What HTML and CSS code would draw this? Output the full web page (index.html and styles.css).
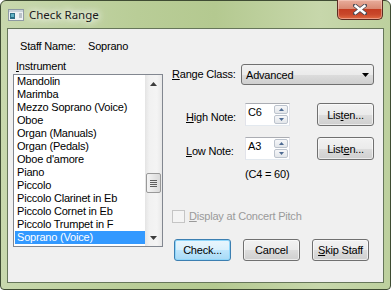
FILE: index.html
```html
<!DOCTYPE html>
<html lang="en">
<head>
    <meta charset="UTF-8">
    <title>Check Range</title>
    <link rel="stylesheet" href="styles.css">
</head>
<body>

<div class="window">
    <div class="titlebar">
        <svg class="app-icon" width="16" height="12" viewBox="0 0 16 12">
            <rect x="0.5" y="0.5" width="15" height="11" fill="#eef2f4" stroke="#8e9aa2"/>
            <rect x="1" y="1" width="14" height="2" fill="#c9d3da"/>
            <rect x="2" y="4" width="5" height="6" fill="#2b6f86"/>
            <rect x="3" y="5" width="3" height="3" fill="#5fb2c4"/>
            <rect x="11" y="4" width="3" height="5" fill="#b9c2c8"/>
        </svg>
        <span class="title">Check Range</span>
        <div class="close">
            <svg width="14" height="11" viewBox="0 0 14 11">
                <path d="M2 1.5 L12 9.5 M12 1.5 L2 9.5" stroke="#4b4b55" stroke-width="4" stroke-linecap="square"/>
                <path d="M2.5 2 L11.5 9 M11.5 2 L2.5 9" stroke="#ffffff" stroke-width="2.4" stroke-linecap="square"/>
            </svg>
        </div>
    </div>

    <div class="client">
        <div class="staff">
            <span class="staff-label">Staff Name:</span>
            <span>Soprano</span>
        </div>

        <div class="main">
            <div class="left">
                <div class="list-label"><u>I</u>nstrument</div>
                <div class="listbox">
                    <ul class="items">
                        <li>Mandolin</li>
                        <li>Marimba</li>
                        <li>Mezzo Soprano (Voice)</li>
                        <li>Oboe</li>
                        <li>Organ (Manuals)</li>
                        <li>Organ (Pedals)</li>
                        <li>Oboe d'amore</li>
                        <li>Piano</li>
                        <li>Piccolo</li>
                        <li>Piccolo Clarinet in Eb</li>
                        <li>Piccolo Cornet in Eb</li>
                        <li>Piccolo Trumpet in F</li>
                        <li class="selected">Soprano (Voice)</li>
                    </ul>
                    <div class="scrollbar">
                        <div class="scroll-btn">
                            <svg width="7" height="4" viewBox="0 0 7 4"><polygon points="3.5,0 7,4 0,4" fill="#3c3c3c"/></svg>
                        </div>
                        <div class="track">
                            <div class="thumb">
                                <span class="grip"></span>
                                <span class="grip"></span>
                                <span class="grip"></span>
                                <span class="grip"></span>
                            </div>
                        </div>
                        <div class="scroll-btn">
                            <svg width="7" height="4" viewBox="0 0 7 4"><polygon points="0,0 7,0 3.5,4" fill="#3c3c3c"/></svg>
                        </div>
                    </div>
                </div>
            </div>

            <div class="right">
                <div class="range-row">
                    <span class="range-label"><u>R</u>ange Class:</span>
                    <div class="dropdown">
                        <span>Advanced</span>
                        <svg width="7" height="4" viewBox="0 0 7 4"><polygon points="0,0 7,0 3.5,4" fill="#000"/></svg>
                    </div>
                </div>

                <div class="note-row high">
                    <span class="note-label"><u>H</u>igh Note:</span>
                    <div class="spin">
                        <span class="spin-text">C6</span>
                        <div class="spin-btns">
                            <div class="spin-btn"><svg width="5" height="3" viewBox="0 0 5 3"><polygon points="2.5,0 5,3 0,3" fill="#4d6a92"/></svg></div>
                            <div class="spin-btn"><svg width="5" height="3" viewBox="0 0 5 3"><polygon points="0,0 5,0 2.5,3" fill="#4d6a92"/></svg></div>
                        </div>
                    </div>
                    <button class="button listen">Lis<u>t</u>en...</button>
                </div>

                <div class="note-row low">
                    <span class="note-label"><u>L</u>ow Note:</span>
                    <div class="spin">
                        <span class="spin-text">A3</span>
                        <div class="spin-btns">
                            <div class="spin-btn"><svg width="5" height="3" viewBox="0 0 5 3"><polygon points="2.5,0 5,3 0,3" fill="#4d6a92"/></svg></div>
                            <div class="spin-btn"><svg width="5" height="3" viewBox="0 0 5 3"><polygon points="0,0 5,0 2.5,3" fill="#4d6a92"/></svg></div>
                        </div>
                    </div>
                    <button class="button listen">List<u>e</u>n...</button>
                </div>

                <div class="hint">(C4 = 60)</div>

                <div class="check-row">
                    <span class="checkbox"></span>
                    <span><u>D</u>isplay at Concert Pitch</span>
                </div>

                <div class="buttons">
                    <button class="button default">Check...</button>
                    <button class="button">Cancel</button>
                    <button class="button"><u>S</u>kip Staff</button>
                </div>
            </div>
        </div>
    </div>
</div>

</body>
</html>
```

FILE: styles.css
```css
body {
    margin: 0;
    background-color: #ffffff;
    font-family: "Liberation Sans", Arial, sans-serif;
    font-size: 11px;
    letter-spacing: -0.2px;
    color: #000000;
}
.window {
    width: 391px;
    height: 290px;
    box-sizing: border-box;
    border: 1px solid #3f4c33;
    border-radius: 6px 6px 4px 4px;
    padding: 0 6px 6px 6px;
    display: flex;
    flex-direction: column;
    background: linear-gradient(to right, #c8d8ad 0%, #b9cd97 35%, #b4c990 55%, #c7d7ab 82%, #bdd09e 100%);
}
.titlebar {
    height: 27px;
    display: flex;
    align-items: flex-start;
}
.app-icon {
    margin: 8px 0 0 1px;
}
.title {
    margin: 6px 0 0 5px;
    line-height: 16px;
    font-family: "Noto Sans", "Open Sans", sans-serif;
    font-size: 11.5px;
    letter-spacing: 0;
    color: #1a1a1a;
    text-shadow: 0 0 6px #ffffff, 0 0 10px #ffffff, 0 0 14px rgba(255, 255, 255, 0.8);
}
.close {
    margin: -1px 1px 0 auto;
    width: 46px;
    height: 20px;
    box-sizing: border-box;
    border: 1px solid #5b2c22;
    border-top: none;
    border-radius: 0 0 5px 5px;
    display: flex;
    align-items: center;
    justify-content: center;
    background: linear-gradient(to bottom, #e8ad9c 0%, #d98a74 45%, #c43d22 50%, #c8472a 75%, #e06a42 100%);
    box-shadow: inset 0 0 0 1px rgba(255, 220, 210, 0.45);
}
.client {
    flex: 1;
    border: 1px solid #66765a;
    background-color: #f0f0f0;
}
.staff {
    display: flex;
    padding: 10px 0 0 12px;
    line-height: 14px;
}
.staff-label {
    width: 68px;
}
.main {
    display: flex;
}
.left {
    margin-left: 5px;
    width: 150px;
}
.list-label {
    margin: 6px 0 1px 3px;
    line-height: 14px;
}
.listbox {
    height: 173px;
    box-sizing: border-box;
    border: 1px solid #828790;
    background-color: #ffffff;
    display: flex;
}
.items {
    flex: 1;
    list-style: none;
    margin: 0;
    padding: 0;
}
.items li {
    height: 13px;
    line-height: 13px;
    margin-left: 1px;
    padding-left: 2px;
    white-space: nowrap;
}
.items li.selected {
    background-color: #3399ff;
    color: #ffffff;
}
.scrollbar {
    width: 17px;
    display: flex;
    flex-direction: column;
    background: linear-gradient(to right, #e4e4e4 0%, #f1f1f1 25%, #f4f4f4 70%, #e8e8e8 100%);
}
.scroll-btn {
    height: 17px;
    display: flex;
    align-items: center;
    justify-content: center;
}
.track {
    flex: 1;
    padding-top: 81px;
}
.thumb {
    margin: 0 1px;
    height: 20px;
    box-sizing: border-box;
    border: 1px solid #999999;
    border-radius: 2px;
    background: linear-gradient(to right, #f4f4f4, #e7e7e7 50%, #dadada);
    display: flex;
    flex-direction: column;
    align-items: center;
    justify-content: center;
    gap: 1px;
}
.grip {
    width: 7px;
    height: 1px;
    background-color: #5e5e5e;
}
.right {
    flex: 1;
    padding-left: 9px;
}
.range-row {
    margin-top: 11px;
    display: flex;
    align-items: center;
}
.range-label {
    width: 69px;
    padding-bottom: 2px;
}
.dropdown {
    width: 133px;
    height: 21px;
    box-sizing: border-box;
    border: 1px solid #707070;
    border-radius: 3px;
    padding: 0 4px 0 4px;
    display: flex;
    align-items: center;
    justify-content: space-between;
    background: linear-gradient(to bottom, #f2f2f2 0%, #ebebeb 50%, #dddddd 50%, #cfcfcf 100%);
}
.note-row {
    display: flex;
    align-items: flex-start;
}
.note-row.high {
    margin-top: 18px;
}
.note-row.low {
    margin-top: 11px;
}
.note-label {
    margin-left: 14px;
    width: 59px;
    line-height: 14px;
    padding-top: 7px;
}
.spin {
    width: 45px;
    height: 23px;
    box-sizing: border-box;
    border: 1px solid #e2e3ea;
    border-top-color: #abadb3;
    border-bottom-color: #e3e9ef;
    background-color: #ffffff;
    padding: 1px 1px 1px 2px;
    display: flex;
}
.spin-text {
    flex: 1;
    line-height: 14px;
}
.spin-btns {
    width: 14px;
    display: flex;
    flex-direction: column;
    gap: 1px;
}
.spin-btn {
    height: 9px;
    box-sizing: border-box;
    border: 1px solid #bcc3cd;
    border-radius: 2px;
    display: flex;
    align-items: center;
    justify-content: center;
    background: linear-gradient(to bottom, #f6f7f9, #e3e6ea);
}
.button {
    width: 57px;
    height: 23px;
    box-sizing: border-box;
    padding: 0;
    border: 1px solid #707070;
    border-radius: 3px;
    font-family: "Liberation Sans", Arial, sans-serif;
    font-size: 11px;
    letter-spacing: -0.2px;
    color: #000000;
    background: linear-gradient(to bottom, #f2f2f2 0%, #ebebeb 50%, #dddddd 50%, #cfcfcf 100%);
    box-shadow: inset 0 0 0 1px rgba(255, 255, 255, 0.6);
}
.listen {
    margin-left: 27px;
}
.hint {
    margin: 7px 0 0 73px;
    line-height: 14px;
}
.check-row {
    margin-top: 28px;
    display: flex;
    align-items: center;
    gap: 4px;
    line-height: 14px;
    color: #9a9a9a;
}
.checkbox {
    width: 13px;
    height: 13px;
    box-sizing: border-box;
    border: 1px solid #c5c5c5;
    background-color: #f4f4f4;
}
.buttons {
    margin: 16px 0 0 2px;
    display: flex;
    gap: 12px;
}
.buttons .button {
    height: 22px;
}
.button.default {
    border-color: #3c7fb1;
    background: linear-gradient(to bottom, #eaf6fd 0%, #d9f0fc 50%, #bee6fd 50%, #a7d9f5 100%);
    box-shadow: inset 0 0 0 1px #8fd6fa;
}
```
